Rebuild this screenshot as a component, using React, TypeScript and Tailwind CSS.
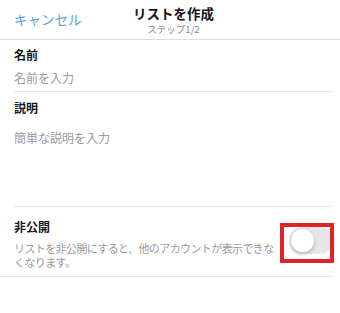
import React from "react";

export default function App() {
  return (
    <div className="relative w-[340px] h-[313px] bg-white overflow-hidden font-['Noto_Sans_CJK_JP','Noto_Sans',sans-serif] text-[#14171a]">
      {/* Header */}
      <div className="grid grid-cols-[1fr_auto_1fr] h-[40px] border-b border-[#dedede]">
        <div className="flex items-start pl-[14px] pt-[10px]">
          <span className="text-[13.5px] leading-[18px] text-[#5a9fd4]">キャンセル</span>
        </div>
        <div className="flex flex-col items-center pt-[5px] ml-[7px]">
          <span className="text-[13.5px] leading-[16px] font-bold">リストを作成</span>
          <span className="mt-[2px] text-[9.5px] leading-[12px] text-[#8a8a8a]">ステップ1/2</span>
        </div>
        <div />
      </div>

      {/* Name */}
      <div className="ml-[14px] w-[319px] border-b border-[#e8e8e8] pt-[7px] pb-[5px]">
        <div className="text-[12px] leading-[16px] font-bold">名前</div>
        <div className="mt-[7px] text-[12px] leading-[16px] text-[#9a9a9a]">名前を入力</div>
      </div>

      {/* Description */}
      <div className="ml-[14px] w-[319px] h-[115px] border-b border-[#e8e8e8] pt-[8px]">
        <div className="text-[12px] leading-[16px] font-bold">説明</div>
        <div className="mt-[14px] text-[12px] leading-[16px] text-[#9a9a9a]">簡単な説明を入力</div>
      </div>

      {/* Private */}
      <div className="w-[333px] border-b border-[#e8e8e8] pt-[12px] pb-[7px]">
        <div className="ml-[14px] flex items-start">
          <div className="w-[264px]">
            <div className="text-[12px] leading-[16px] font-bold">非公開</div>
            <div className="mt-[6px] text-[11px] leading-[14px] tracking-[-0.6px] text-[#9a9a9a]">
              リストを非公開にすると、他のアカウントが表示できなくなります。
            </div>
          </div>
        </div>
      </div>

      {/* Toggle */}
      <div className="absolute left-[289px] top-[227px] w-[44px] h-[27px] rounded-full bg-[#e6e6e9]">
        <div className="absolute left-[1px] top-[1px] w-[25px] h-[25px] rounded-full bg-white border border-[#d6d6d6] shadow-[0_2px_3px_rgba(0,0,0,0.18)]" />
      </div>

      {/* Red highlight box */}
      <div className="absolute left-[280px] top-[223px] w-[54px] h-[40px] border-[4px] border-[#e1222a]" />
    </div>
  );
}
